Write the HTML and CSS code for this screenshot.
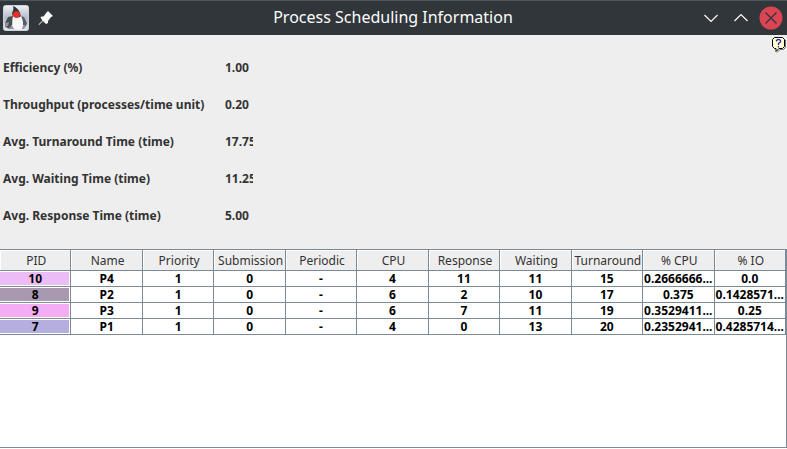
FILE: index.html
```html
<!DOCTYPE html>
<html lang="en">
<head>
<meta charset="utf-8">
<title>Process Scheduling Information</title>
<link rel="stylesheet" href="styles.css">
</head>
<body>
<header class="titlebar">
  <div class="side">
    <svg class="app-icon" width="26" height="26" viewBox="0 0 26 26" aria-hidden="true">
      <defs>
        <linearGradient id="tile" x1="0" y1="0" x2="0" y2="1"><stop offset="0" stop-color="#f0f1f4"/><stop offset=".5" stop-color="#b4bbc9"/><stop offset="1" stop-color="#e6e9ee"/></linearGradient>
      </defs>
      <rect x=".5" y=".5" width="25" height="25" rx="2" fill="url(#tile)" stroke="#c9d2e4"/>
      <path d="M3 21h20l-2 3H5z" fill="#8d929b"/>
      <path d="M2 18l3-6 5-1 1 4-2 5-3 3-4-1z" fill="#4a4e53"/>
      <path d="M17 11l4 1 3 6-1 3-4-1z" fill="#5a5e63"/>
      <path d="M10 1c3 1 6 4 7 7l1 4-4 2-4-2-1-4c1-2 2-4 1-7z" fill="#303437"/>
      <path d="M10 11c2 2 6 2 8 0 2 4 3 9 1 13-3 1-6 1-9-1-1-4-1-8 0-12z" fill="#f7f7f5"/>
      <path d="M2 18l4-1-1 4-3 1z" fill="#92969c"/>
      <circle cx="13.500" cy="9.500" r="3.300" fill="#f02d25"/>
    </svg>
    <button class="tool" aria-label="Keep above">
      <svg width="16" height="16" viewBox="0 0 16 16"><path d="M10 1l5 5-2 1-3 4v2l-2 1-3-3-4 4-.5-.5 4-4-2-3 1-1h2l3-4z" fill="#fcfcfc"/></svg>
    </button>
  </div>
  <h1>Process Scheduling Information</h1>
  <div class="side controls">
    <button class="tool" aria-label="Minimize"><svg width="16" height="16" viewBox="0 0 16 16"><path d="M1.500 5L8 11.500 14.500 5" fill="none" stroke="#fcfcfc" stroke-width="1.200"/></svg></button>
    <button class="tool" aria-label="Maximize"><svg width="16" height="16" viewBox="0 0 16 16"><path d="M1.500 11L8 4.500 14.500 11" fill="none" stroke="#fcfcfc" stroke-width="1.200"/></svg></button>
    <button class="tool" aria-label="Close"><svg width="24" height="24" viewBox="0 0 24 24"><circle cx="12" cy="12" r="11.500" fill="#da4453"/><path d="M6.500 6.500l11 11M17.500 6.500l-11 11" stroke="#31363b" stroke-width="1.300"/></svg></button>
  </div>
</header>
<main>
  <section class="summary">
    <dl>
      <dt>Efficiency (%)</dt><dd>1.00</dd>
      <dt>Throughput (processes/time unit)</dt><dd>0.20</dd>
      <dt>Avg. Turnaround Time (time)</dt><dd>17.75</dd>
      <dt>Avg. Waiting Time (time)</dt><dd>11.25</dd>
      <dt>Avg. Response Time (time)</dt><dd>5.00</dd>
    </dl>
    <button class="help" aria-label="Help"><svg width="16" height="16" viewBox="0 0 16 16"><path d="M6 15.500L9 12.500h3.500l2-2V3" fill="none" stroke="#777"/><path d="M3.500.5h8l2 2v7l-2 2H8l-3 3v-3H3.500l-2-2v-7z" fill="#ffffcc" stroke="#000"/><path d="M5.500 4.500V3.500L6.500 2.700h2L9.500 3.500V5L7.500 6.500V8M7.500 9v1.500" fill="none" stroke="#2a1fb0" stroke-width="1.300"/></svg></button>
  </section>
  <section class="processes">
    <table>
      <thead><tr><th>PID</th><th>Name</th><th>Priority</th><th>Submission</th><th>Periodic</th><th>CPU</th><th>Response</th><th>Waiting</th><th>Turnaround</th><th>% CPU</th><th>% IO</th></tr></thead>
      <tbody>
        <tr><td class="pid p4">10</td><td>P4</td><td>1</td><td>0</td><td>-</td><td>4</td><td>11</td><td>11</td><td>15</td><td>0.2666666...</td><td>0.0</td></tr>
        <tr><td class="pid p2">8</td><td>P2</td><td>1</td><td>0</td><td>-</td><td>6</td><td>2</td><td>10</td><td>17</td><td>0.375</td><td>0.1428571...</td></tr>
        <tr><td class="pid p3">9</td><td>P3</td><td>1</td><td>0</td><td>-</td><td>6</td><td>7</td><td>11</td><td>19</td><td>0.3529411...</td><td>0.25</td></tr>
        <tr><td class="pid p1">7</td><td>P1</td><td>1</td><td>0</td><td>-</td><td>4</td><td>0</td><td>13</td><td>20</td><td>0.2352941...</td><td>0.4285714...</td></tr>
      </tbody>
    </table>
  </section>
</main>
</body>
</html>
```
FILE: styles.css
```css
* { box-sizing: border-box; }
body {
  margin: 0;
  min-height: 100vh;
  display: flex;
  flex-direction: column;
  background: #fff;
  color: #333;
  font: bold 12px/16px "Noto Sans", sans-serif;
}
button { padding: 0; border: 0; background: none; }
svg { display: block; }
.titlebar {
  display: grid;
  grid-template-columns: 1fr auto 1fr;
  align-items: center;
  height: 35px;
  padding: 0 4px 0 3px;
  background: #31363b;
  border-top: 1px solid #50565b;
  color: #fcfcfc;
}
.titlebar h1 { margin: 0; padding-bottom: 2px; font-size: 16px; font-weight: 400; line-height: 22px; }
.side { display: flex; align-items: center; gap: 9px; }
.controls { justify-content: flex-end; gap: 14px; }
.controls .tool:last-child { margin-left: -4px; }
main { flex: 1; display: flex; flex-direction: column; padding-bottom: 1px; }
.summary {
  display: flex;
  justify-content: space-between;
  align-items: flex-start;
  height: 214px;
  background: #eee;
}
.summary dl {
  margin: 0;
  padding: 25px 0 0 3px;
  display: grid;
  grid-template-columns: 222px 28px;
  row-gap: 21px;
}
.summary dd { margin: 0; overflow: hidden; }
.help { padding: 2px 0 0; }
.processes {
  flex: 1;
  border: solid #7a8a99;
  border-width: 1px 1px 1px 0;
}
table { width: 100%; table-layout: fixed; border-collapse: separate; border-spacing: 0; }
th, td {
  padding: 0;
  border-right: 1px solid #7a8a99;
  border-bottom: 1px solid #7a8a99;
  text-align: center;
  white-space: nowrap;
  overflow: hidden;
}
th {
  height: 21px;
  padding: 2px 0 0 2px;
  background: #eee;
  box-shadow: inset 1px 1px #fff;
  font-weight: 400;
}
td { height: 16px; line-height: 15px; color: #000; }
.pid { box-shadow: inset -1px 1px #fff, inset 0 -1px #fff; }
.p4 { background: #ecbcf6; }
.p2 { background: #a899b0; }
.p3 { background: #f4adf4; }
.p1 { background: #b5aede; }
```
